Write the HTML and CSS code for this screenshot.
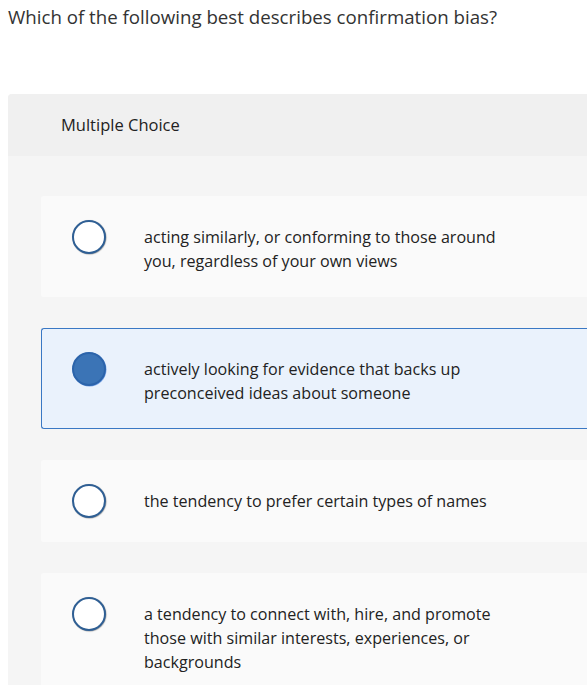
FILE: index.html
```html
<!DOCTYPE html>
<html>
<head>
<meta charset="utf-8">
<link rel="stylesheet" href="styles.css">
</head>
<body>
<div class="question">Which of the following best describes confirmation bias?</div>
<div class="panel">
  <div class="panel-head">Multiple Choice</div>
  <div class="panel-body">
    <div class="option">
      <span class="radio"></span>
      <div class="label">acting similarly, or conforming to those around<br>you, regardless of your own views</div>
    </div>
    <div class="option selected">
      <span class="radio"></span>
      <div class="label">actively looking for evidence that backs up<br>preconceived ideas about someone</div>
    </div>
    <div class="option">
      <span class="radio"></span>
      <div class="label">the tendency to prefer certain types of names</div>
    </div>
    <div class="option">
      <span class="radio"></span>
      <div class="label">a tendency to connect with, hire, and promote<br>those with similar interests, experiences, or<br>backgrounds</div>
    </div>
  </div>
</div>
</body>
</html>
```
FILE: styles.css
```css
html, body {
  margin: 0;
  padding: 0;
  background: #ffffff;
  overflow: hidden;
}
body {
  padding: 0 0 0 8px;
  font-family: "Open Sans", Lato, Arial, sans-serif;
  font-variant-ligatures: none;
  color: #333333;
}
.question {
  font-size: 18.7px;
  line-height: 24px;
  padding-top: 5px;
  color: #333333;
}
.panel {
  margin-top: 65px;
  border-radius: 4px 0 0 0;
  overflow: hidden;
  background: #f5f5f5;
}
.panel-head {
  background: #f0f0f0;
  height: 62px;
  box-sizing: border-box;
  padding: 19px 0 0 53px;
  font-size: 16.5px;
  line-height: 24px;
  color: #222222;
}
.panel-body {
  padding: 40px 0 0 33px;
  display: flex;
  flex-direction: column;
  gap: 31px;
}
.option {
  display: flex;
  align-items: flex-start;
  background: #fafafa;
  border: 1px solid #fafafa;
  border-right: none;
  border-radius: 3px 0 0 3px;
  padding: 23px 0 23px 30px;
  min-height: 33px;
}
.option.selected {
  background: #eaf2fc;
  border-color: #3a78c4;
}
.radio {
  flex: none;
  width: 30px;
  height: 30px;
  border-radius: 50%;
  border: 2px solid #2f5f94;
  background: #ffffff;
  box-shadow: 0.5px 0.5px 1px rgba(0,0,0,0.35);
}
.selected .radio {
  background: #3b74b6;
  border-color: #2c64aa;
  box-shadow: 0.5px 0.5px 0.5px rgba(40,110,220,0.6);
}
.label {
  margin-left: 38px;
  padding-top: 5px;
  font-size: 16.1px;
  line-height: 24px;
  color: #222222;
}
```
